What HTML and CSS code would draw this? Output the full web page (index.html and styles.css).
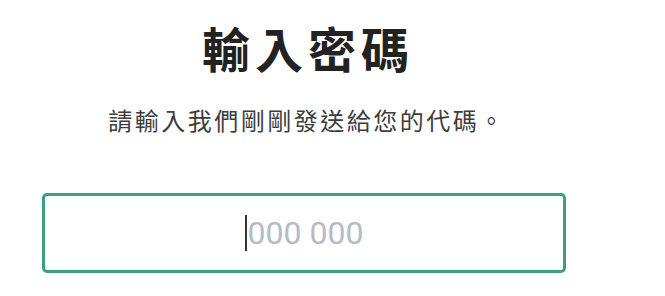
FILE: index.html
```html
<!DOCTYPE html>
<html lang="zh-Hant">
<head>
<meta charset="utf-8">
<link rel="stylesheet" href="styles.css">
</head>
<body>
<main class="panel">
  <h1 class="title">輸入密碼</h1>
  <p class="subtitle">請輸入我們剛剛發送給您的代碼。</p>
  <div class="field">
    <span class="caret"></span><span class="placeholder">000 000</span>
  </div>
</main>
</body>
</html>
```
FILE: styles.css
```css
html, body {
  margin: 0;
  padding: 0;
  background: #ffffff;
}
body {
  font-family: "Noto Sans CJK TC", "Noto Sans", sans-serif;
}
.panel {
  width: 524px;
  margin-left: 42px;
  padding-top: 15px;
  display: flex;
  flex-direction: column;
  align-items: center;
}
.title {
  margin: 0;
  font-size: 48px;
  line-height: 64px;
  font-weight: 700;
  color: #222222;
  letter-spacing: 5px;
  padding-left: 8px;
}
.subtitle {
  margin: 23px 0 0;
  font-size: 24px;
  line-height: 36px;
  color: #3d3d3d;
  letter-spacing: 2.5px;
  padding-left: 6px;
}
.field {
  box-sizing: border-box;
  width: 524px;
  height: 80px;
  margin-top: 55px;
  border: 3px solid #3f9e80;
  border-radius: 5px;
  display: flex;
  align-items: center;
  justify-content: center;
}
.caret {
  width: 2px;
  height: 36px;
  margin-right: 1px;
  background: #333333;
}
.placeholder {
  font-family: Roboto, "Liberation Sans", sans-serif;
  font-size: 32px;
  color: #b6b9c6;
}
```
